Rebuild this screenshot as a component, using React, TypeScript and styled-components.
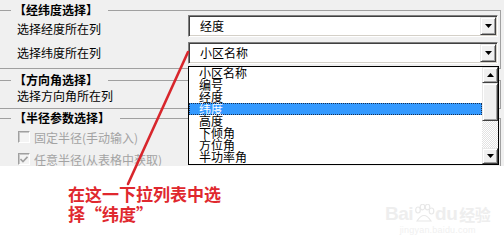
import React from 'react';
import styled, { createGlobalStyle } from 'styled-components';

const GlobalStyle = createGlobalStyle`
  html, body { margin: 0; padding: 0; background: #fff; }
  body {
    font-family: "Noto Sans CJK SC", "Noto Sans", sans-serif;
    font-size: 12px;
    color: #000;
  }
  * { box-sizing: border-box; }
`;

const Page = styled.div`
  position: relative;
  width: 504px;
  height: 250px;
  overflow: hidden;
  background: #fff;
`;

const Dialog = styled.div`
  height: 166px;
  background: #f0f0f0;
  padding-top: 4px;
  overflow: hidden;
  display: flex;
  flex-direction: column;
`;

const Group = styled.section<{ $mt: number }>`
  margin-top: ${(p) => p.$mt}px;
  margin-right: 3px;
  flex-shrink: 0;
`;

const GroupHeader = styled.div`
  display: flex;
  height: 11px;
`;

const LeadLine = styled.div`
  width: 11px;
  margin-top: 6px;
  border-top: 1px solid #a0a0a0;
`;

const TrailLine = styled.div`
  flex: 1;
  margin-top: 6px;
  border-top: 1px solid #a0a0a0;
  border-right: 1px solid #a0a0a0;
`;

const Caption = styled.h3`
  margin: 0;
  padding: 0 10px 0 3px;
  font-size: 12px;
  font-weight: bold;
  line-height: 11px;
  white-space: nowrap;
  color: #000;
`;

const GroupBody = styled.div<{ $pt: number; $pb: number; $gap: number }>`
  padding: ${(p) => p.$pt}px 2px ${(p) => p.$pb}px 17px;
  border-right: 1px solid #a0a0a0;
  border-bottom: 1px solid #a0a0a0;
  display: flex;
  flex-direction: column;
  gap: ${(p) => p.$gap}px;
`;

const FieldRow = styled.div`
  display: grid;
  grid-template-columns: 171px 1fr;
  align-items: center;
  height: 22px;
`;

const FieldLabel = styled.label<{ $dy?: number }>`
  margin-top: ${(p) => p.$dy ?? 0}px;
  line-height: 14px;
  white-space: nowrap;
`;

const Combo = styled.div`
  height: 22px;
  display: flex;
  align-items: center;
  background: #fff;
  border: 1px solid;
  border-color: #808080 #fff #fff #808080;
  box-shadow: inset 1px 1px 0 #404040, inset -1px -1px 0 #d4d0c8;
  padding: 1px;
`;

const ComboText = styled.span`
  flex: 1;
  padding-left: 10px;
  line-height: 18px;
  white-space: nowrap;
`;

const RaisedButton = styled.div<{ $h: number }>`
  width: 16px;
  height: ${(p) => p.$h}px;
  flex-shrink: 0;
  background: #f0f0f0;
  border: 1px solid;
  border-color: #e8e8e8 #404040 #404040 #e8e8e8;
  box-shadow: inset 1px 1px 0 #fff, inset -1px -1px 0 #a0a0a0;
  display: flex;
  align-items: center;
  justify-content: center;
`;

const Arrow = ({ up }: { up?: boolean }) => (
  <svg width="7" height="4" viewBox="0 0 7 4">
    <polygon points={up ? '3.5,0 7,4 0,4' : '0,0 7,0 3.5,4'} fill="#000" />
  </svg>
);

const CheckRow = styled.label`
  display: flex;
  align-items: center;
  height: 22px;
  gap: 4px;
  padding-left: 1px;
  color: #a3a3a3;
  white-space: nowrap;
`;

const CheckBox = styled.span`
  width: 12px;
  height: 12px;
  flex-shrink: 0;
  background: #f4f4f4;
  border: 1px solid;
  border-color: #a0a0a0 #fff #fff #a0a0a0;
  box-shadow: inset 1px 1px 0 #c8c8c8;
  display: flex;
  align-items: center;
  justify-content: center;
`;

const DropList = styled.div`
  position: absolute;
  left: 188px;
  top: 66px;
  width: 311px;
  height: 99px;
  border: 1px solid #000;
  background: #fff;
  display: flex;
`;

const Items = styled.ul`
  flex: 1;
  margin: 0;
  padding: 0;
  list-style: none;
`;

const Item = styled.li<{ $selected?: boolean }>`
  height: 12px;
  line-height: 12px;
  padding-left: 10px;
  white-space: nowrap;
  background: ${(p) => (p.$selected ? '#3399ff' : 'transparent')};
  color: ${(p) => (p.$selected ? '#fff' : '#000')};
  outline: ${(p) => (p.$selected ? '1px dotted #1a3050' : 'none')};
  outline-offset: -1px;
`;

const ScrollBar = styled.div`
  width: 16px;
  display: flex;
  flex-direction: column;
`;

const Thumb = styled.div`
  height: 38px;
  background: #f0f0f0;
  border: 1px solid;
  border-color: #e8e8e8 #404040 #404040 #e8e8e8;
  box-shadow: inset 1px 1px 0 #fff, inset -1px -1px 0 #a0a0a0;
`;

const Track = styled.div`
  flex: 1;
  background: repeating-conic-gradient(#fff 0 25%, #e2e2e2 0 50%) 0 0 / 2px 2px;
`;

const Annotation = styled.p`
  margin: 0;
  width: 158px;
  margin-left: 68px;
  padding-top: 18px;
  color: #e0282e;
  font-weight: bold;
  font-size: 17px;
  line-height: 20px;
`;

const Pointer = styled.svg`
  position: absolute;
  left: 0;
  top: 0;
  pointer-events: none;
`;

const Watermark = styled.div`
  position: absolute;
  left: 385px;
  top: 203px;
  display: flex;
  flex-direction: column;
  align-items: center;
  color: #eeeeee;
  font-family: "Liberation Sans", Arial, sans-serif;
`;

const MarkLogo = styled.div`
  display: flex;
  align-items: center;
  font-size: 19px;
  font-weight: bold;
  line-height: 22px;
  letter-spacing: -0.5px;
`;

const MarkCn = styled.span`
  font-family: "Noto Sans CJK SC", sans-serif;
  font-size: 16px;
  margin-left: 2px;
`;

const MarkUrl = styled.span`
  font-size: 9px;
  line-height: 11px;
  letter-spacing: 0.2px;
  color: #f0f0f0;
`;

const listItems = ['小区名称', '编号', '经度', '纬度', '高度', '下倾角', '方位角', '半功率角'];

export default function App() {
  return (
    <Page>
      <GlobalStyle />
      <Dialog>
        <Group $mt={0}>
          <GroupHeader>
            <LeadLine />
            <Caption>【经纬度选择】</Caption>
            <TrailLine />
          </GroupHeader>
          <GroupBody $pt={0} $pb={4} $gap={5}>
            <FieldRow>
              <FieldLabel $dy={6}>选择经度所在列</FieldLabel>
              <Combo>
                <ComboText>经度</ComboText>
                <RaisedButton $h={18}>
                  <Arrow />
                </RaisedButton>
              </Combo>
            </FieldRow>
            <FieldRow>
              <FieldLabel>选择纬度所在列</FieldLabel>
              <Combo>
                <ComboText>小区名称</ComboText>
                <RaisedButton $h={18}>
                  <Arrow />
                </RaisedButton>
              </Combo>
            </FieldRow>
          </GroupBody>
        </Group>
        <Group $mt={5}>
          <GroupHeader>
            <LeadLine />
            <Caption>【方向角选择】</Caption>
            <TrailLine />
          </GroupHeader>
          <GroupBody $pt={0} $pb={1} $gap={0}>
            <FieldRow>
              <FieldLabel>选择方向角所在列</FieldLabel>
              <Combo>
                <ComboText>方位角</ComboText>
                <RaisedButton $h={18}>
                  <Arrow />
                </RaisedButton>
              </Combo>
            </FieldRow>
          </GroupBody>
        </Group>
        <Group $mt={3}>
          <GroupHeader>
            <LeadLine />
            <Caption>【半径参数选择】</Caption>
            <TrailLine />
          </GroupHeader>
          <GroupBody $pt={3} $pb={4} $gap={0}>
            <CheckRow>
              <CheckBox />
              固定半径(手动输入)
            </CheckRow>
            <CheckRow>
              <CheckBox>
                <svg width="8" height="7" viewBox="0 0 8 7">
                  <path d="M0.5 3 L3 5.5 L7.5 0.8" stroke="#a0a0a0" strokeWidth="1.6" fill="none" />
                </svg>
              </CheckBox>
              任意半径(从表格中获取)
            </CheckRow>
          </GroupBody>
        </Group>
      </Dialog>

      <Annotation>在这一下拉列表中选择“纬度”</Annotation>

      <DropList>
        <Items>
          {listItems.map((t) => (
            <Item key={t} $selected={t === '纬度'}>
              {t}
            </Item>
          ))}
        </Items>
        <ScrollBar>
          <RaisedButton $h={16}>
            <Arrow up />
          </RaisedButton>
          <Thumb />
          <Track />
          <RaisedButton $h={16}>
            <Arrow />
          </RaisedButton>
        </ScrollBar>
      </DropList>

      <Pointer width="504" height="250" viewBox="0 0 504 250">
        <line x1="188" y1="52" x2="128" y2="184" stroke="#d8262c" strokeWidth="2.6" strokeLinecap="round" />
      </Pointer>

      <Watermark>
        <MarkLogo>
          Bai
          <svg width="22" height="20" viewBox="0 0 22 20">
            <ellipse cx="5" cy="6" rx="2.3" ry="3" fill="none" stroke="#e8e8e8" strokeWidth="1.2" />
            <ellipse cx="9.5" cy="3" rx="2.3" ry="2.8" fill="none" stroke="#e8e8e8" strokeWidth="1.2" />
            <ellipse cx="14.5" cy="3" rx="2.3" ry="2.8" fill="none" stroke="#e8e8e8" strokeWidth="1.2" />
            <ellipse cx="18.5" cy="7" rx="2.3" ry="3" fill="none" stroke="#e8e8e8" strokeWidth="1.2" />
            <path d="M4 17 Q11 6 18 17 Z" fill="none" stroke="#e8e8e8" strokeWidth="1.2" />
          </svg>
          du
          <MarkCn>经验</MarkCn>
        </MarkLogo>
        <MarkUrl>jingyan.baidu.com</MarkUrl>
      </Watermark>
    </Page>
  );
}
